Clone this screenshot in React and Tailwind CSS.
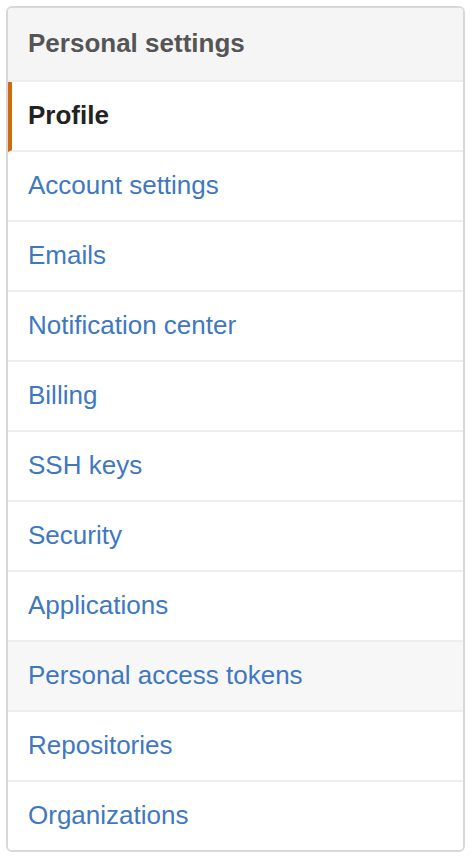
import React from "react";

const ITEMS = [
  { label: "Profile", selected: true },
  { label: "Account settings" },
  { label: "Emails" },
  { label: "Notification center" },
  { label: "Billing" },
  { label: "SSH keys" },
  { label: "Security" },
  { label: "Applications" },
  { label: "Personal access tokens", hover: true },
  { label: "Repositories" },
  { label: "Organizations" },
];

function MenuItem({ label, selected, hover, last }) {
  if (selected) {
    return (
      <div className="flex h-[70px] items-center border-b-2 border-[#eeeeee] border-l-4 border-l-[#d26911] pb-[2px] pl-[16px] pr-5 font-bold text-[#222222]">
        {label}
      </div>
    );
  }
  return (
    <a
      href="#"
      className={`flex items-center px-5 pb-[2px] text-[#4078c0] ${last ? "h-[68px]" : "h-[70px] border-b-2 border-[#eeeeee]"} ${hover ? "bg-[#f7f7f7]" : "bg-white"}`}
    >
      {label}
    </a>
  );
}

export default function App() {
  return (
    <div
      className="min-h-screen bg-white p-[6px] text-[26px] leading-none"
      style={{ fontFamily: '"Liberation Sans", Arial, sans-serif' }}
    >
      <nav className="w-[459px] overflow-hidden rounded-[6px] border-2 border-[#d8d8d8]">
        <h3 className="flex h-[74px] items-center border-b-2 border-[#eeeeee] bg-[#f5f5f5] px-5 pb-[2px] text-[26px] font-bold text-[#555555]">
          Personal settings
        </h3>
        {ITEMS.map((item, i) => (
          <MenuItem key={item.label} {...item} last={i === ITEMS.length - 1} />
        ))}
      </nav>
    </div>
  );
}
